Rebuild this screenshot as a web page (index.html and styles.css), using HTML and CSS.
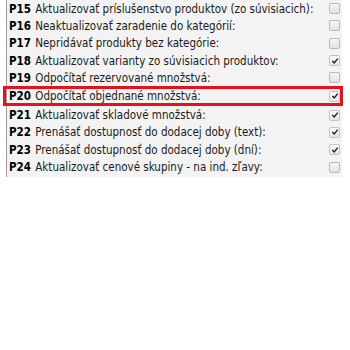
FILE: index.html
```html
<!DOCTYPE html>
<html lang="sk">
<head>
  <meta charset="UTF-8">
  <title>Nastavenia importu</title>
  <link rel="stylesheet" href="styles.css">
</head>
<body class="page">
  <ul class="params">
    <li class="params__row">
      <span class="params__label"><b class="params__code">P15</b> Aktualizovať príslušenstvo produktov (zo súvisiacich):</span>
      <input class="params__check" type="checkbox">
    </li>
    <li class="params__row">
      <span class="params__label"><b class="params__code">P16</b> Neaktualizovať zaradenie do kategórií:</span>
      <input class="params__check" type="checkbox">
    </li>
    <li class="params__row">
      <span class="params__label"><b class="params__code">P17</b> Nepridávať produkty bez kategórie:</span>
      <input class="params__check" type="checkbox">
    </li>
    <li class="params__row">
      <span class="params__label"><b class="params__code">P18</b> Aktualizovať varianty zo súvisiacich produktov:</span>
      <input class="params__check" type="checkbox" checked>
    </li>
    <li class="params__row">
      <span class="params__label"><b class="params__code">P19</b> Odpočítať rezervované množstvá:</span>
      <input class="params__check" type="checkbox">
    </li>
    <li class="params__row params__row--active">
      <span class="params__label"><b class="params__code">P20</b> Odpočítať objednané množstvá:</span>
      <input class="params__check" type="checkbox" checked>
    </li>
    <li class="params__row">
      <span class="params__label"><b class="params__code">P21</b> Aktualizovať skladové množstvá:</span>
      <input class="params__check" type="checkbox" checked>
    </li>
    <li class="params__row">
      <span class="params__label"><b class="params__code">P22</b> Prenášať dostupnosť do dodacej doby (text):</span>
      <input class="params__check" type="checkbox" checked>
    </li>
    <li class="params__row">
      <span class="params__label"><b class="params__code">P23</b> Prenášať dostupnosť do dodacej doby (dní):</span>
      <input class="params__check" type="checkbox" checked>
    </li>
    <li class="params__row">
      <span class="params__label"><b class="params__code">P24</b> Aktualizovať cenové skupiny - na ind. zľavy:</span>
      <input class="params__check" type="checkbox">
    </li>
  </ul>
</body>
</html>
```

FILE: styles.css
```css
*, *::before, *::after {
  box-sizing: border-box;
}

.page {
  margin: 0;
  background: #ffffff;
  font-family: "DejaVu Sans Condensed", "DejaVu Sans", sans-serif;
  font-size: 11.5px;
  color: #1a1a1a;
}

.params {
  list-style: none;
  margin: 0 8px 0 6px;
  padding: 0 0 1px;
  background: #f3f3f3;
  border-left: 1px solid #a0a0a0;
}

.params__row {
  display: flex;
  align-items: center;
  justify-content: space-between;
  height: 17.3px;
  padding: 0 2px 0 2px;
}

.params__row--active {
  height: 20px;
  margin: 0 -1px 0 -4px;
  padding-left: 3px;
  padding-right: 0;
  border: 3px solid #e5121b;
}

.params__code {
  font-weight: bold;
  color: #000000;
  margin-right: 1px;
}

.params__check {
  appearance: none;
  width: 11px;
  height: 11px;
  margin: 0;
  border: 1px solid #b9b9b9;
  border-radius: 2px;
  background: linear-gradient(#f7f7f7, #e2e2e2);
}

.params__check:checked {
  border-color: #c4c4c4;
  background: url("data:image/svg+xml,%3Csvg xmlns='http://www.w3.org/2000/svg' viewBox='0 0 9 9'%3E%3Cpath d='M1.5 4.6 3.6 6.8 7.6 1.8' fill='none' stroke='%23222' stroke-width='1.6'/%3E%3C/svg%3E") center / 8px 8px no-repeat, linear-gradient(#fafafa, #e6e6e6);
}
```
